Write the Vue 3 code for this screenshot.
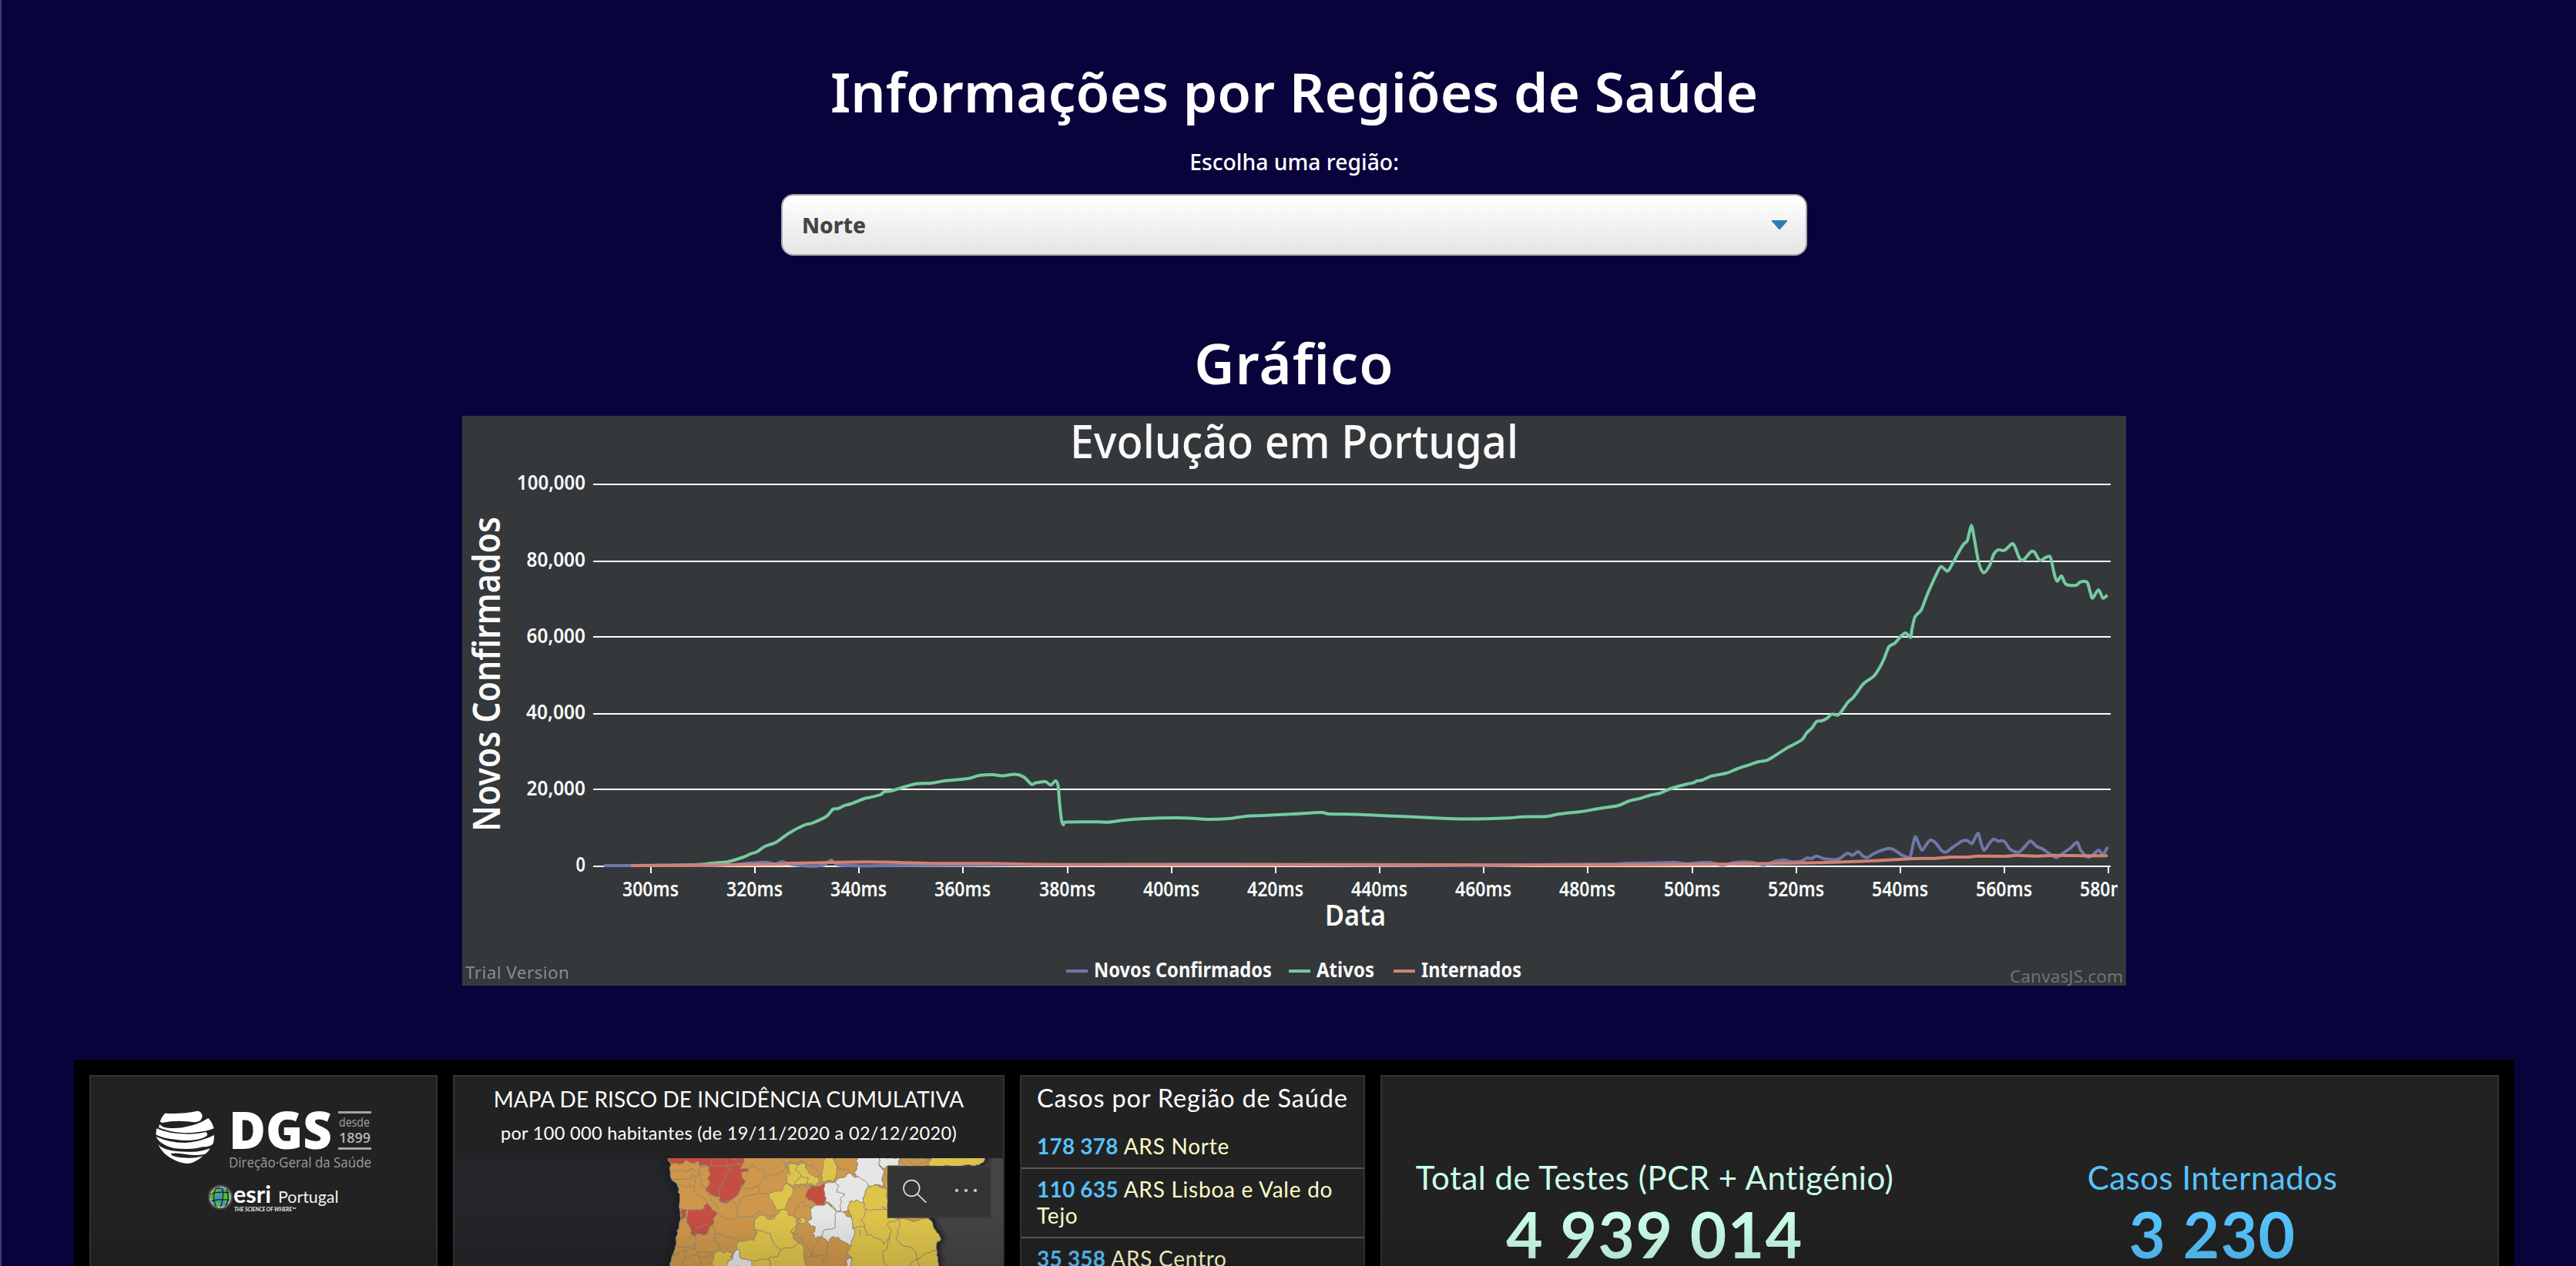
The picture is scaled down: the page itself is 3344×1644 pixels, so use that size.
<script setup>
const parse = (s) => s.trim().split(/\s+/).map((p) => p.split(',').map(Number))

// Catmull-Rom spline through the data points
const spline = (s) => {
  const p = parse(s)
  let d = `M${p[0]}`
  for (let i = 0; i < p.length - 1; i++) {
    const a = p[Math.max(i - 1, 0)], b = p[i], c = p[i + 1], e = p[Math.min(i + 2, p.length - 1)]
    const k = 7
    d += `C${b[0] + (c[0] - a[0]) / k},${b[1] + (c[1] - a[1]) / k} ${c[0] - (e[0] - b[0]) / k},${c[1] - (e[1] - b[1]) / k} ${c[0]},${c[1]}`
  }
  return d
}

const series = [
  { color: '#6e78a9', d: spline('784,1124 900,1124 951,1123 972,1121 995,1119.7 1006,1122 1015,1119 1024,1122 1042,1124 1054,1125 1070,1123 1079,1117 1087,1123 1104,1124 1127,1124.5 1146,1124 1257,1123.5 1313,1123 1600,1122.5 1700,1123 1900,1124 2007,1122.7 2091,1122 2108,1121.3 2122,1121 2161,1120.3 2175,1120 2189,1121.7 2217,1119.7 2236,1123.3 2252,1120 2273,1119.7 2289,1123.3 2305,1118.3 2317,1116.7 2324,1119 2338.5,1118.3 2345.5,1114.3 2352,1114.7 2358,1111.7 2369,1115.3 2385.5,1116 2398,1108 2405,1110.7 2412,1106 2419,1112.3 2425,1113.3 2434.6,1107.3 2453.6,1101.7 2469.7,1110.7 2479,1113.3 2482,1103.3 2486,1086.7 2490,1094 2495,1104 2500.6,1096.7 2506,1091 2512.5,1094.3 2520,1104 2526,1106.7 2534,1101 2547,1092.3 2554,1091.7 2559.5,1095.7 2563,1090 2568,1082 2571.4,1094 2575.6,1104.3 2582,1096 2588,1089.7 2594,1092.3 2601.6,1092.3 2608.6,1102 2615.6,1106 2622,1106 2629,1098.7 2636,1092.3 2643.7,1099 2652,1102.7 2662.6,1110 2669.6,1113.7 2678.8,1107.3 2687,1102 2696.3,1093.7 2701,1104 2710.3,1113 2717,1110 2724.4,1104 2730,1109.3 2736,1100') },
  { color: '#74cba1', d: spline('844,1124 903,1123 924,1121 945,1119 965,1113 974,1109 983,1106 993,1099 1007,1094 1024,1082 1045,1071 1054,1069 1073,1060 1081,1051 1088,1050 1096,1046 1104,1044 1122,1037 1127,1036 1143,1032 1148,1028 1157,1027 1188,1018 1209,1017 1226,1014 1257,1011 1271,1007 1289,1006 1301,1007.5 1318,1005.5 1329,1009 1339,1018.5 1344,1016.7 1357,1015 1364,1019.5 1370,1014 1373.5,1020 1375.5,1043 1378,1065 1380.5,1071 1384,1067.5 1424,1067.3 1438,1067.7 1459,1065 1487,1063 1528,1062 1549,1062.7 1569,1064 1598,1062.7 1619,1059.7 1640,1059 1680,1057 1687,1056.5 1715.6,1055 1726,1057 1765,1057.7 1810,1059.7 1859,1062 1901,1063.5 1958,1062.3 1975,1060.7 2007,1060.3 2024,1057 2052,1054 2077,1049.7 2100,1046.3 2115,1040 2129.5,1036.7 2142,1032.7 2155,1030 2169,1024 2190.5,1018 2198,1016.7 2203,1014 2210,1013 2222,1007.7 2241,1004 2256,998 2272.6,992.7 2283,989 2293,987.7 2302,982.7 2319,971.7 2338.7,961 2345,952 2352.5,945 2358,937 2365,936 2371.5,933 2378,927.3 2386,928.7 2391,923 2399,911.7 2406.4,905 2418,889 2424,884 2432.5,878 2440,867 2446,855 2452,840 2460,835 2468,825.7 2474,822 2480,827.7 2482,817 2486,801 2494,792 2502,771.7 2514.6,744 2520,735.7 2528,741.7 2534,733 2541,720 2548.7,707 2554,701.7 2559,682.3 2563,700 2568.5,730 2575,743.7 2583,734 2588,720 2594,714 2602,714.7 2612,706 2615.6,710 2620.6,723 2624.5,727.7 2629,725 2636.6,716.3 2641,717 2648,728 2654,724.7 2660.6,722.3 2663,728 2667.4,748 2670.7,754.7 2676,748 2682,758.7 2695,760 2700,756 2706,755 2710,757 2713.7,770 2716.6,776.7 2724,766 2730,776.7 2735.6,772.7') },
  { color: '#d38074', d: spline('819,1124 1007,1122.5 1024,1121 1077,1120 1125,1119.3 1167,1120 1216,1121.3 1285,1121.3 1382,1122.7 1680,1122.7 2091,1123.3 2231,1122.3 2301,1121.3 2371,1120 2427,1118 2483,1115 2512,1114.7 2533,1113 2554,1113 2568,1111.7 2603,1112 2617,1110.7 2645,1111.7 2666,1110.7 2708,1111.3 2736,1111.3') },
]

const yTicks = [
  { text: '100,000', line: 629, base: 636, w: 89 },
  { text: '80,000', line: 729, base: 736, w: 76.5 },
  { text: '60,000', line: 827, base: 835, w: 76.5 },
  { text: '40,000', line: 927, base: 934, w: 77 },
  { text: '20,000', line: 1025, base: 1033, w: 76.5 },
  { text: '0', line: 1125, base: 1132, w: 12.5 },
]
const xTicks = Array.from({ length: 15 }, (_, i) => ({
  text: `${300 + i * 20}ms`,
  x: Math.round(845 + i * 135.15),
}))
const legend = [
  { text: 'Novos Confirmados', dash: 1384, x: 1420, w: 231, color: '#6e78a9' },
  { text: 'Ativos', dash: 1673, x: 1709, w: 75, color: '#74cba1' },
  { text: 'Internados', dash: 1809, x: 1845, w: 130, color: '#d38074' },
]

const regions = [
  { n: '178 378', name: 'ARS Norte' },
  { n: '110 635', name: 'ARS Lisboa e Vale do Tejo' },
  { n: '35 358', name: 'ARS Centro' },
]

// Irregular municipal borders: each edge is broken up by repeatable offsets,
// so neighbouring shapes that share an edge stay aligned.
const hash = (a, b) => {
  const v = Math.sin(a * 12.9898 + b * 78.233) * 43758.5453
  return v - Math.floor(v) - 0.5
}
const split = (a, b, depth) => {
  const len = Math.hypot(b[0] - a[0], b[1] - a[1])
  if (!depth || len < 11) return [b]
  const r = hash(a[0] + b[0], a[1] + b[1]) * Math.min(len, 40) * 0.4
  const flip = a[0] < b[0] || (a[0] === b[0] && a[1] < b[1]) ? 1 : -1
  const m = [
    (a[0] + b[0]) / 2 + ((b[1] - a[1]) / len) * r * flip,
    (a[1] + b[1]) / 2 - ((b[0] - a[0]) / len) * r * flip,
  ]
  return [...split(a, m, depth - 1), ...split(m, b, depth - 1)]
}
const jag = (s, close) => {
  const p = parse(s)
  if (close) p.push(p[0])
  let out = [p[0]]
  for (let i = 0; i < p.length - 1; i++) out = out.concat(split(p[i], p[i + 1], 3))
  return 'M' + out.map((q) => q.map((v) => v.toFixed(1)).join(',')).join('L') + (close ? 'Z' : '')
}

const O = '#ce974b', R = '#c44e41', Y = '#dfc44b', W = '#e6e6e6'
const coast = '82,36 92,62 95,124 118,148 128,200 132,280 118,340 110,385 95,430 85,470 1134,470 1130,410 1128,370 1140,365 1138,342 1120,320 1112,295 1095,270 1000,180 1000,75 1275,72 1290,68 1315,50 1318,36'
const areas = [
  [O, coast],
  [R, '82,36 380,36 372,66 360,80 395,85 390,95 365,98 382,135 365,150 358,180 342,195 325,205 297,218 282,210 284,190 255,188 230,158 242,145 245,100 240,75 205,72 202,55 180,64 148,52 125,66 92,62'],
  [R, '160,242 205,245 222,240 220,225 235,218 248,232 252,245 275,256 258,275 255,300 240,318 222,342 208,335 185,345 170,335 165,305 155,290'],
  [R, '132,240 156,242 152,262 148,275 132,282'],
  [R, '640,150 690,140 688,165 695,185 692,215 682,238 665,225 642,208 620,195 625,165'],
  [Y, '550,66 572,62 582,68 600,62 622,62 618,80 630,100 668,115 672,135 655,150 640,140 625,142 600,142 575,145 548,140 543,120 552,95'],
  [Y, '685,70 692,36 722,36 738,85 738,105 728,135 680,135 678,110'],
  [Y, '475,182 525,170 548,140 558,150 568,160 565,185 545,215 535,242 505,245 492,225 478,200'],
  [Y, '415,285 430,272 455,265 480,280 505,262 520,242 545,245 548,262 570,268 585,300 578,325 570,355 590,372 612,395 618,470 258,470 265,408 283,400 296,412 332,408 325,430 350,398 355,365 415,362 428,335 417,310'],
  [W, '308,470 315,440 335,432 342,405 358,398 362,430 380,435 408,440 412,470'],
  [Y, '588,285 602,272 618,280 612,296 595,295'],
  [W, '820,36 905,36 902,65 925,92 918,112 920,150 860,150 825,120 805,95 820,70'],
  [W, '905,36 985,36 985,72 918,85 902,65'],
  [W, '690,140 745,122 790,100 830,120 862,152 850,180 843,215 818,205 790,210 782,248 750,245 738,250 720,225 695,212 692,180'],
  [Y, '862,152 900,150 937,165 937,275 1095,275 1112,295 1120,320 1138,342 1140,365 1128,370 1130,410 1134,470 790,470 800,430 780,405 795,382 808,340 800,315 795,275 785,245 790,210 818,205 843,215 850,180'],
  [W, '635,245 645,235 690,225 700,215 740,250 770,255 795,275 800,315 808,340 795,382 770,370 745,350 720,348 705,370 680,345 655,355 645,335 655,310 625,292 640,280'],
  [W, '775,440 795,430 795,445 790,470 778,470'],
  [Y, '1105,36 1318,36 1312,55 1290,68 1275,72 1098,72 1095,60'],
].map(([fill, pts]) => ({ fill, d: jag(pts, true) }))

const borders = [
  '205,72 250,68 254,42', '250,68 305,72 308,42', '305,72 372,66', '305,72 328,85 305,120 290,145 275,160 284,190',
  '92,90 130,85 150,95 175,82 205,110 205,72', '95,124 150,122 175,118 175,100', '118,148 170,148 185,158 180,110',
  '180,110 212,120 215,155 230,158', '185,158 200,190 222,200 235,218', '230,158 245,200 262,215 275,240',
  '395,85 410,72 412,64', '410,72 430,88 455,88 460,110 430,150 385,165 365,150', '455,120 500,105 540,80 550,66',
  '430,150 440,180 475,182', '540,80 528,42', '540,62 600,52 640,70 678,110', '725,42 738,85 790,95',
  '548,75 560,100 545,115', '590,64 580,90 600,110 580,130 575,145', '600,110 630,120 625,142',
  '282,210 330,205 355,235 352,270 315,280 275,256', '355,235 362,205 395,188 430,182', '352,270 415,270 440,245 480,270 505,262',
  '568,160 600,145 640,150', '620,195 600,215 580,240 572,268', '600,230 640,235 635,245', '572,268 600,285 585,300',
  '258,300 265,335 300,345 345,358 355,365', '262,335 258,365 290,400', '132,282 155,290', '165,345 190,345 195,310 255,300',
  '190,345 188,395 205,412 258,410', '110,385 155,390 188,375', '95,420 140,400 188,395', '140,400 150,430 135,462',
  '155,430 200,420 205,462', '200,430 255,412',
  '585,300 560,330 600,355 625,385 640,425 612,430', '680,345 662,375 645,395 640,425', '705,370 700,420 680,440 690,462',
  '560,330 578,325', '640,425 690,420', '415,320 450,325 480,335 490,370 525,400 510,425 470,435 412,440',
  '525,400 570,390 590,372', '470,435 480,462', '695,212 738,250', '730,130 748,150 740,175 770,180 752,200 755,245',
  '695,320 735,310 740,250', '680,345 695,320', '845,215 850,240 930,240 915,230 935,245', '850,240 832,285 848,305 820,310 800,315',
  '830,320 828,345', '848,305 855,340 880,350 920,378 945,350 950,320 935,300 978,280', '978,280 975,340 970,355 1000,385 1030,392 1055,435 1090,412 1130,405',
  '945,350 930,400 915,405 920,430 935,462', '1055,435 1030,450 1025,462', '1055,435 1062,462', '985,42 1010,72', '1010,42 1050,72 1085,60 1105,42',
  '782,248 785,245', '920,150 935,160 925,92', '335,42 372,66',
].map((s) => jag(s, false))
</script>

<template>
  <main class="page">
    <h1 class="heading">Informações por Regiões de Saúde</h1>
    <label class="label">Escolha uma região:</label>
    <div class="select">
      <span class="select-value">Norte</span>
      <svg class="caret" viewBox="0 0 20 12"><path d="M0 0h20q.5 1-.5 2L11 11.4q-1 1-2 0L.5 2Q-.5 1 0 0Z" fill="#2f7cb0" /></svg>
    </div>

    <h1 class="heading chart-heading">Gráfico</h1>
    <svg class="chart" viewBox="600 540 2160 740">
      <defs>
        <clipPath id="plot"><rect x="600" y="540" width="2149" height="740" /></clipPath>
      </defs>
      <text x="1389" y="595" font-size="60" font-weight="500" textLength="582" lengthAdjust="spacingAndGlyphs">Evolução em Portugal</text>
      <text transform="translate(649 1080) rotate(-90)" font-size="49" font-weight="600" textLength="409" lengthAdjust="spacingAndGlyphs">Novos Confirmados</text>
      <g v-for="t in yTicks" :key="t.text">
        <rect x="770" :y="t.line - 1" width="1970" height="2" fill="#fff" />
        <text :x="760 - t.w" :y="t.base" font-size="26.5" font-weight="600" :textLength="t.w" lengthAdjust="spacingAndGlyphs">{{ t.text }}</text>
      </g>
      <g clip-path="url(#plot)">
        <g v-for="t in xTicks" :key="t.text">
          <rect :x="t.x - 1" y="1126" width="2" height="8" fill="#fff" />
          <text :x="t.x - 37" y="1164.3" font-size="26.5" font-weight="600" textLength="73" lengthAdjust="spacingAndGlyphs">{{ t.text }}</text>
        </g>
      </g>
      <path v-for="s in series" :key="s.color" :d="s.d" :stroke="s.color" class="line" />
      <text x="1720" y="1202" font-size="38" font-weight="600" textLength="79" lengthAdjust="spacingAndGlyphs">Data</text>
      <g v-for="l in legend" :key="l.text">
        <rect :x="l.dash" y="1259" width="28" height="4" :fill="l.color" />
        <text :x="l.x" y="1269" font-size="26" font-weight="700" :textLength="l.w" lengthAdjust="spacingAndGlyphs">{{ l.text }}</text>
      </g>
      <text x="604" y="1271.3" class="mark trial" textLength="135">Trial Version</text>
      <text x="2609" y="1276" class="mark vendor" textLength="147">CanvasJS.com</text>
    </svg>

    <section class="dashboard">
      <article class="panel logos">
        <svg class="logo" viewBox="118 1398 448 246">
          <g transform="translate(190 1430) scale(.33333)" fill="#fff">
            <path d="M72 47Q140 51 200 38Q214 39 218 58Q217 80 188 82Q120 72 62 84L53 80Q58 62 72 47Z" />
            <path d="M52 90Q62 102 84 104Q128 108 160 98Q205 90 241 66Q256 80 263 106Q225 122 150 124Q78 118 48 102Z" />
            <path d="M40 106Q85 128 160 128Q200 128 232 120Q242 128 234 136Q214 152 150 153Q68 148 37 130Z" />
            <path d="M38 138Q90 162 150 162Q212 158 264 132Q264 156 258 168Q244 178 220 178Q180 190 110 184Q50 168 38 138Z" />
            <path d="M46 168Q58 184 100 193Q140 200 200 196Q226 192 248 184Q240 200 226 207Q190 214 150 206Q110 200 96 204Q94 216 140 220Q186 224 220 214Q190 240 163 243Q130 240 112 230Q62 208 46 168Z" />
          </g>
          <text x="297" y="1491.7" class="dgs" fill="#fff" font-size="68" font-weight="800" textLength="134" lengthAdjust="spacingAndGlyphs">DGS</text>
          <rect x="439" y="1443" width="43" height="3" fill="#a5a5a5" />
          <rect x="439" y="1490" width="43" height="3" fill="#a5a5a5" />
          <text x="440" y="1462.7" class="dgs" fill="#a0a0a0" font-size="17" textLength="40" lengthAdjust="spacingAndGlyphs">desde</text>
          <text x="440" y="1483.5" class="dgs" fill="#b5b5b5" font-size="18" font-weight="600" textLength="41" lengthAdjust="spacingAndGlyphs">1899</text>
          <text x="297" y="1515.5" class="dgs" fill="#9c9c9c" font-size="18.5" textLength="185" lengthAdjust="spacingAndGlyphs">Direção·Geral da Saúde</text>
          <defs>
            <radialGradient id="halo"><stop offset=".8" stop-color="#aaa" stop-opacity=".6" /><stop offset="1" stop-color="#888" stop-opacity="0" /></radialGradient>
            <clipPath id="earth"><circle cx="286" cy="1554.7" r="13" /></clipPath>
          </defs>
          <circle cx="286" cy="1554.7" r="17" fill="url(#halo)" />
          <g clip-path="url(#earth)">
            <circle cx="286" cy="1554.7" r="13" fill="#3f8fd0" />
            <path d="M272 1541h11q4 4 0 8l-5 9-6 1ZM288 1547l11-4v14l-7 6-5-7ZM278 1560l9 1-2 8-8-1Z" fill="#58b53a" />
            <path d="M272 1551q14-5 28-1M273 1560q14-4 27-1M276 1545q10-4 20-1M281 1541q-7 13 0 27M288 1541q4 13-2 27M293 1542q7 13-1 26" fill="none" stroke="#10251f" stroke-width="1.3" />
          </g>
          <circle cx="286" cy="1554.7" r="13" fill="none" stroke="#d8e4e4" stroke-width="1" stroke-dasharray="9 6" />
          <text x="303" y="1562" fill="#fff" font-size="31" font-weight="700" textLength="49" lengthAdjust="spacingAndGlyphs">esri</text>
          <text x="361" y="1562" fill="#f0f0f0" font-size="20.5" textLength="78.5" lengthAdjust="spacingAndGlyphs">Portugal</text>
          <text x="304" y="1572.8" fill="#eee" font-size="6.6" font-weight="700" font-style="italic" textLength="80" lengthAdjust="spacingAndGlyphs">THE SCIENCE OF WHERE™</text>
        </svg>
      </article>

      <article class="panel risk">
        <h2 class="risk-title">MAPA DE RISCO DE INCIDÊNCIA CUMULATIVA</h2>
        <p class="risk-sub">por 100 000 habitantes (de 19/11/2020 a 02/12/2020)</p>
        <svg class="map" viewBox="-750 42 2136 420">
          <defs><filter id="soft"><feGaussianBlur stdDeviation="10" /></filter></defs>
          <rect x="-750" y="42" width="2136" height="420" fill="#232529" />
          <path d="M1120 42H1386V462H1120Z" fill="#444446" />
          <path :d="areas[0].d" fill="none" stroke="#1f1f22" stroke-width="24" filter="url(#soft)" />
          <path v-for="(a, i) in areas" :key="i" :d="a.d" :fill="a.fill" class="border" />
          <path v-for="(b, i) in borders" :key="'b' + i" :d="b" fill="none" class="border" />
          <rect x="936" y="72" width="402" height="203" fill="#3b3b3b" />
          <rect x="942" y="78" width="396" height="191" fill="#333" />
          <g fill="none" stroke="#dcdcdc" stroke-width="5"><circle cx="1030" cy="159" r="31" /><path d="m1052 181 35 34" /></g>
          <g fill="#c4c4c4"><circle cx="1206" cy="168" r="6.5" /><circle cx="1242" cy="168" r="6.5" /><circle cx="1278" cy="168" r="6.5" /></g>
        </svg>
      </article>

      <article class="panel cases">
        <h2 class="cases-title">Casos por Região de Saúde</h2>
        <ul>
          <li v-for="r in regions" :key="r.name"><b>{{ r.n }}</b> {{ r.name }}</li>
        </ul>
      </article>

      <article class="panel totals">
        <div class="total tests">
          <span class="total-label">Total de Testes (PCR + Antigénio)</span>
          <strong>4 939 014</strong>
        </div>
        <div class="total inpatients">
          <span class="total-label">Casos Internados</span>
          <strong>3 230</strong>
        </div>
      </article>
    </section>
  </main>
</template>

<style>
html, body { background: #09033b; overflow: hidden; }
</style>

<style scoped>
* { box-sizing: border-box; }
.page {
  width: 100%;
  height: 1644px;
  overflow: hidden;
  padding: 69px 0 0 14px;
  border-left: 2px solid #433c68;
  display: flex;
  flex-direction: column;
  align-items: center;
  background: #09033b;
  color: #fff;
  font-family: "Noto Sans", "Open Sans", sans-serif;
}
.heading { margin: 0; font-size: 71.2px; line-height: 100px; font-weight: 600; white-space: nowrap; }
.label { margin-top: 21px; font-size: 28.3px; line-height: 40px; font-weight: 500; }
.select {
  margin-top: 22px;
  width: 1332px;
  height: 80px;
  flex: none;
  display: flex;
  align-items: center;
  justify-content: space-between;
  padding: 0 24px 0 25px;
  border: 2px solid #aaa;
  border-radius: 16px;
  background: linear-gradient(#fff, #e5e5e5);
  color: #444;
  font-size: 28px;
  font-weight: 800;
}
.select-value { margin-top: -1px; }
.caret { width: 20px; height: 12px; }
.chart-heading { margin-top: 89px; font-size: 72px; letter-spacing: 1.1px; }
.chart { flex: none; display: block; margin-top: 19px; width: 2160px; height: 740px; background: #34383a; font-family: "Noto Sans", "Open Sans", sans-serif; }
.chart text { fill: #fafafa; }
.chart .mark { font-size: 22.5px; }
.chart .trial { fill: #8a8b8c; }
.chart .vendor { fill: #707273; }
.line { fill: none; stroke-width: 4; stroke-linejoin: round; }
.dashboard {
  position: relative;
  flex: none;
  margin-top: 96px;
  width: 3168px;
  height: 300px;
  padding: 20px;
  display: flex;
  gap: 20px;
  background: #000;
  font-family: Lato, "Open Sans", sans-serif;
}
.dashboard::after {
  content: "";
  position: absolute;
  inset: 200px 0 32px;
  background: linear-gradient(transparent, rgba(0, 0, 0, .12));
}
.panel { flex: none; height: 300px; border: 2px solid #333; background: #222; overflow: hidden; }
.logos { width: 452px; }
.logo { display: block; width: 448px; height: 246px; }
.dgs { font-family: "Open Sans", sans-serif; }
.risk { width: 716px; text-align: center; }
.risk-title { margin: 9px 0 0; font-size: 28px; line-height: 40px; font-weight: 400; letter-spacing: .08px; white-space: nowrap; }
.risk-sub { margin: 4px 0 13px; font-size: 23.5px; line-height: 40px; letter-spacing: .32px; white-space: nowrap; }
.map { display: block; width: 712px; height: 140px; }
.border { stroke: #8e8873; stroke-width: 3; stroke-linejoin: round; }
.cases { width: 448px; }
.cases-title { margin: 8px 0 0 20px; font-size: 32.5px; line-height: 40px; font-weight: 400; letter-spacing: .8px; white-space: nowrap; }
.cases ul { list-style: none; margin: 16px 0 0; padding: 0; }
.cases li { padding: 9px 16px 11px 20px; border-bottom: 2px solid #5a5a5a; color: #ffffc8; font-size: 28px; line-height: 34px; letter-spacing: .75px; }
.cases b { color: #56c1fb; font-weight: 700; letter-spacing: .2px; }
.totals { width: 1452px; display: flex; }
.total { display: flex; flex-direction: column; align-items: center; padding-top: 101px; }
.tests { width: 708px; color: #cbffe9; }
.inpatients { width: 740px; color: #56c4ff; }
.total-label { font-size: 42px; line-height: 60px; letter-spacing: .5px; white-space: nowrap; }
.total strong { font-size: 82px; line-height: 100px; font-weight: 700; letter-spacing: 1.4px; margin-top: -7px; }
</style>
